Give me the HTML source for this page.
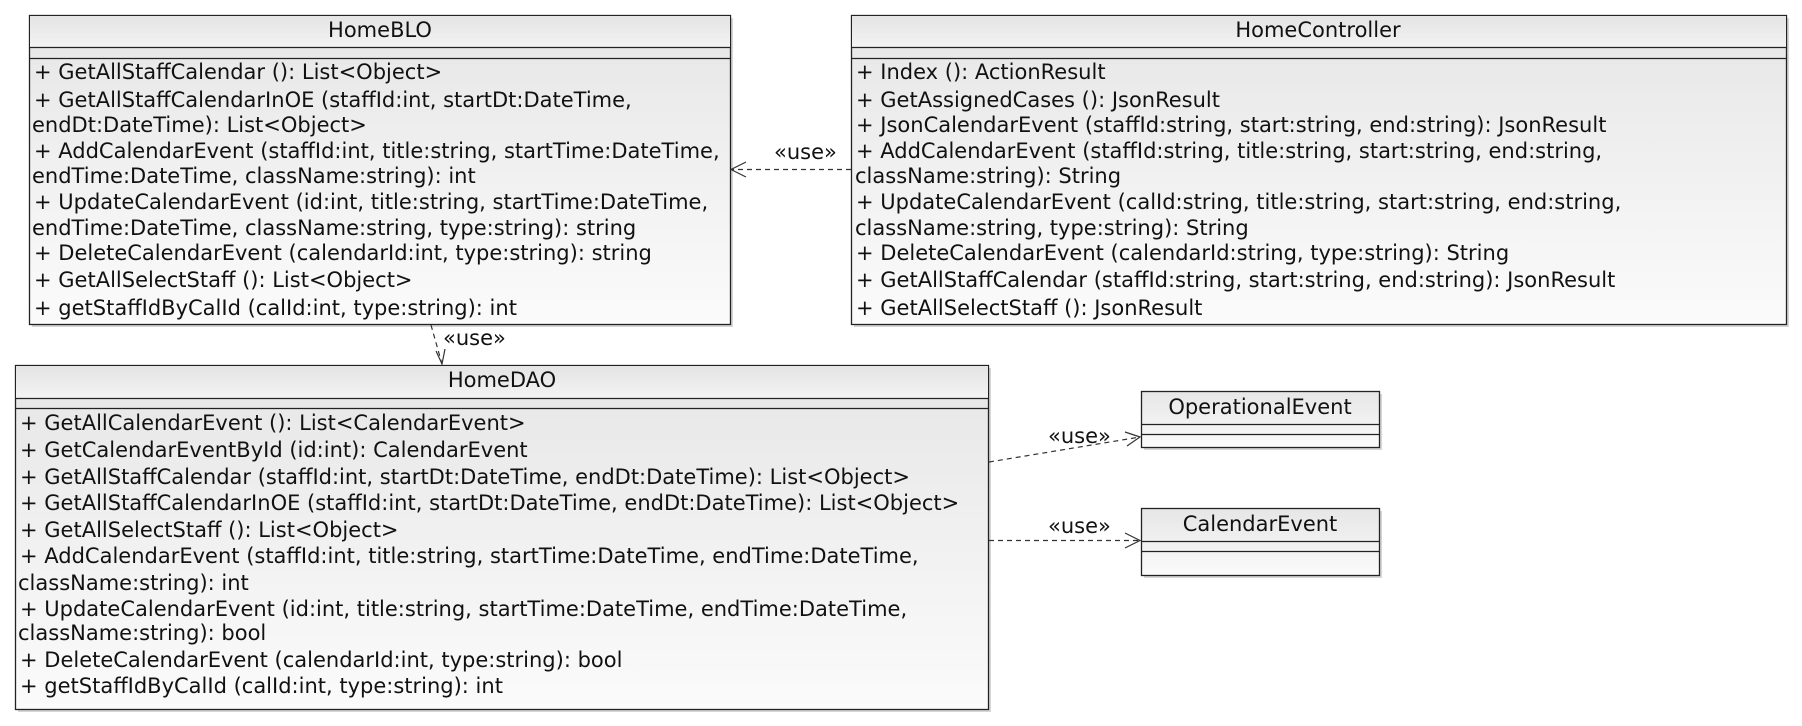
<!DOCTYPE html>
<html><head><meta charset="utf-8"><style>
html,body{margin:0;padding:0;background:#fff;width:1802px;height:726px;overflow:hidden}
svg text{font-family:"DejaVu Sans","Liberation Sans",sans-serif;font-size:21px;fill:#111}
</style></head><body>
<svg width="1802" height="726" xmlns="http://www.w3.org/2000/svg">
<defs>
<linearGradient id="g" x1="0" y1="0" x2="0" y2="1">
<stop offset="0" stop-color="#e6e6e6"/><stop offset="1" stop-color="#fbfbfb"/></linearGradient>
<linearGradient id="h" x1="0" y1="0" x2="0" y2="1">
<stop offset="0" stop-color="#e4e4e4"/><stop offset="1" stop-color="#f3f3f3"/></linearGradient>
</defs>
<g fill="#d6d6d6">
<rect x="32" y="18" width="701" height="309"/>
<rect x="854" y="18" width="935" height="309"/>
<rect x="18" y="368" width="973" height="344"/>
<rect x="1144" y="394" width="238" height="56"/>
<rect x="1144" y="511" width="238" height="67"/>
</g>
<g stroke="#222" stroke-width="1.3">
<rect x="29.5" y="15.5" width="701" height="309" fill="url(#g)"/>
<rect x="30" y="16" width="700" height="31" fill="url(#h)" stroke="none"/>
<line x1="29.5" y1="47.5" x2="730.5" y2="47.5"/><line x1="29.5" y1="58.5" x2="730.5" y2="58.5"/>
<rect x="851.5" y="15.5" width="935" height="309" fill="url(#g)"/>
<rect x="852" y="16" width="934" height="31" fill="url(#h)" stroke="none"/>
<line x1="851.5" y1="47.5" x2="1786.5" y2="47.5"/><line x1="851.5" y1="58.5" x2="1786.5" y2="58.5"/>
<rect x="15.5" y="365.5" width="973" height="344" fill="url(#g)"/>
<rect x="16" y="366" width="972" height="32" fill="url(#h)" stroke="none"/>
<line x1="15.5" y1="398.5" x2="988.5" y2="398.5"/><line x1="15.5" y1="408.5" x2="988.5" y2="408.5"/>
<rect x="1141.5" y="391.5" width="238" height="56" fill="url(#g)"/>
<line x1="1141.5" y1="424.5" x2="1379.5" y2="424.5"/><line x1="1141.5" y1="434.5" x2="1379.5" y2="434.5"/>
<rect x="1141.5" y="508.5" width="238" height="67" fill="url(#g)"/>
<line x1="1141.5" y1="541.5" x2="1379.5" y2="541.5"/><line x1="1141.5" y1="551.5" x2="1379.5" y2="551.5"/>
</g>
<g stroke="#333" stroke-width="1.2" fill="none">
<line x1="851" y1="169.5" x2="731" y2="169.5" stroke-dasharray="5,4"/>
<polyline points="746,162 731,169.5 746,177"/>
<line x1="431" y1="325" x2="442" y2="364" stroke-dasharray="5,4"/>
<polyline points="436,351 442,364 445,349"/>
<line x1="989" y1="462" x2="1140" y2="437" stroke-dasharray="5,4"/>
<polyline points="1125,432 1140,437 1127,446"/>
<line x1="989" y1="540.5" x2="1140" y2="540.5" stroke-dasharray="5,4"/>
<polyline points="1125,533 1140,540.5 1125,548"/>
</g>
<text x="380" y="37" text-anchor="middle">HomeBLO</text>
<text x="1318" y="37" text-anchor="middle">HomeController</text>
<text x="502" y="387" text-anchor="middle">HomeDAO</text>
<text x="1260" y="414" text-anchor="middle">OperationalEvent</text>
<text x="1260" y="531" text-anchor="middle">CalendarEvent</text>
<text x="774" y="159">«use»</text>
<text x="443" y="345">«use»</text>
<text x="1048" y="443">«use»</text>
<text x="1048" y="533">«use»</text>
<g>
<text x="34" y="79">+ GetAllStaffCalendar (): List&lt;Object&gt;</text>
<text x="34" y="107">+ GetAllStaffCalendarInOE (staffId:int, startDt:DateTime,</text>
<text x="32" y="132">endDt:DateTime): List&lt;Object&gt;</text>
<text x="34" y="158">+ AddCalendarEvent (staffId:int, title:string, startTime:DateTime,</text>
<text x="32" y="183">endTime:DateTime, className:string): int</text>
<text x="34" y="209">+ UpdateCalendarEvent (id:int, title:string, startTime:DateTime,</text>
<text x="32" y="235">endTime:DateTime, className:string, type:string): string</text>
<text x="34" y="260">+ DeleteCalendarEvent (calendarId:int, type:string): string</text>
<text x="34" y="287">+ GetAllSelectStaff (): List&lt;Object&gt;</text>
<text x="34" y="315">+ getStaffIdByCalId (calId:int, type:string): int</text>
</g>
<g>
<text x="856" y="79">+ Index (): ActionResult</text>
<text x="856" y="107">+ GetAssignedCases (): JsonResult</text>
<text x="856" y="132">+ JsonCalendarEvent (staffId:string, start:string, end:string): JsonResult</text>
<text x="856" y="158">+ AddCalendarEvent (staffId:string, title:string, start:string, end:string,</text>
<text x="855" y="183">className:string): String</text>
<text x="856" y="209">+ UpdateCalendarEvent (calId:string, title:string, start:string, end:string,</text>
<text x="855" y="235">className:string, type:string): String</text>
<text x="856" y="260">+ DeleteCalendarEvent (calendarId:string, type:string): String</text>
<text x="856" y="287">+ GetAllStaffCalendar (staffId:string, start:string, end:string): JsonResult</text>
<text x="856" y="315">+ GetAllSelectStaff (): JsonResult</text>
</g>
<g>
<text x="20" y="430">+ GetAllCalendarEvent (): List&lt;CalendarEvent&gt;</text>
<text x="20" y="457">+ GetCalendarEventById (id:int): CalendarEvent</text>
<text x="20" y="484">+ GetAllStaffCalendar (staffId:int, startDt:DateTime, endDt:DateTime): List&lt;Object&gt;</text>
<text x="20" y="510">+ GetAllStaffCalendarInOE (staffId:int, startDt:DateTime, endDt:DateTime): List&lt;Object&gt;</text>
<text x="20" y="537">+ GetAllSelectStaff (): List&lt;Object&gt;</text>
<text x="20" y="563">+ AddCalendarEvent (staffId:int, title:string, startTime:DateTime, endTime:DateTime,</text>
<text x="18" y="590">className:string): int</text>
<text x="20" y="616">+ UpdateCalendarEvent (id:int, title:string, startTime:DateTime, endTime:DateTime,</text>
<text x="18" y="640">className:string): bool</text>
<text x="20" y="667">+ DeleteCalendarEvent (calendarId:int, type:string): bool</text>
<text x="20" y="693">+ getStaffIdByCalId (calId:int, type:string): int</text>
</g>
</svg>
</body></html>
